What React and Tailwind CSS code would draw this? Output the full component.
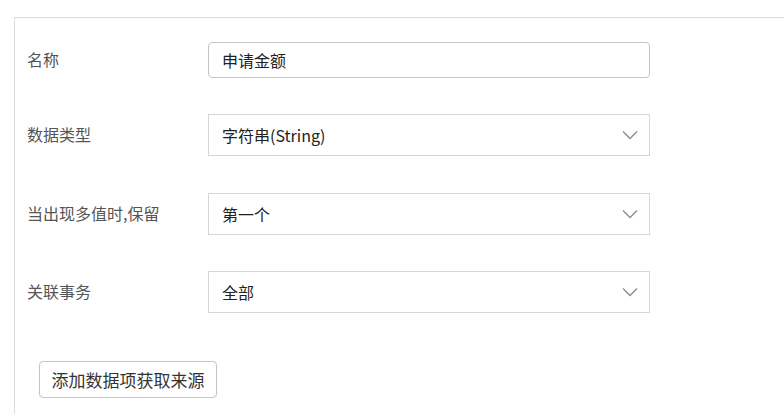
import React from 'react';

const font = { fontFamily: '"Noto Sans CJK SC", "Liberation Sans", sans-serif' };

const Chevron = () => (
  <svg width="16" height="10" viewBox="0 0 16 10" fill="none" className="text-[#8a8a8a]">
    <path d="M1 1.5 L8 8.5 L15 1.5" stroke="currentColor" strokeWidth="1.3" />
  </svg>
);

const SelectBox = ({ value }) => (
  <div className="w-[442px] h-[42px] border border-[#d6d6d6] bg-white flex items-center justify-between pl-[13px] pr-[11px]">
    <span className="text-[16px] text-[#222]">{value}</span>
    <Chevron />
  </div>
);

const Row = ({ label, children, className = '' }) => (
  <div className={`flex items-center ${className}`}>
    <div className="w-[181px] text-[16px] text-[#555] -mt-[2px]">{label}</div>
    {children}
  </div>
);

export default function App() {
  return (
    <div className="w-[784px] h-[414px] bg-white overflow-hidden" style={font}>
      <div className="ml-[14px] mt-[17px] border-t border-l border-[#dcdcdc] h-[420px] pl-[12px] pt-[24px]">
        <Row label="名称">
          <div className="w-[442px] h-[36px] border border-[#c4c4c4] rounded-[4px] flex items-center pl-[13px]">
            <span className="text-[16px] text-[#222]">申请金额</span>
          </div>
        </Row>
        <Row label="数据类型" className="mt-[36px]">
          <SelectBox value="字符串(String)" />
        </Row>
        <Row label="当出现多值时,保留" className="mt-[37px]">
          <SelectBox value="第一个" />
        </Row>
        <Row label="关联事务" className="mt-[36px]">
          <SelectBox value="全部" />
        </Row>
        <div className="mt-[48px] pl-[12px]">
          <button className="h-[37px] w-[178px] border border-[#c4c4c4] rounded-[4px] bg-white text-[17px] text-[#333] flex items-center justify-center">
            添加数据项获取来源
          </button>
        </div>
      </div>
    </div>
  );
}
